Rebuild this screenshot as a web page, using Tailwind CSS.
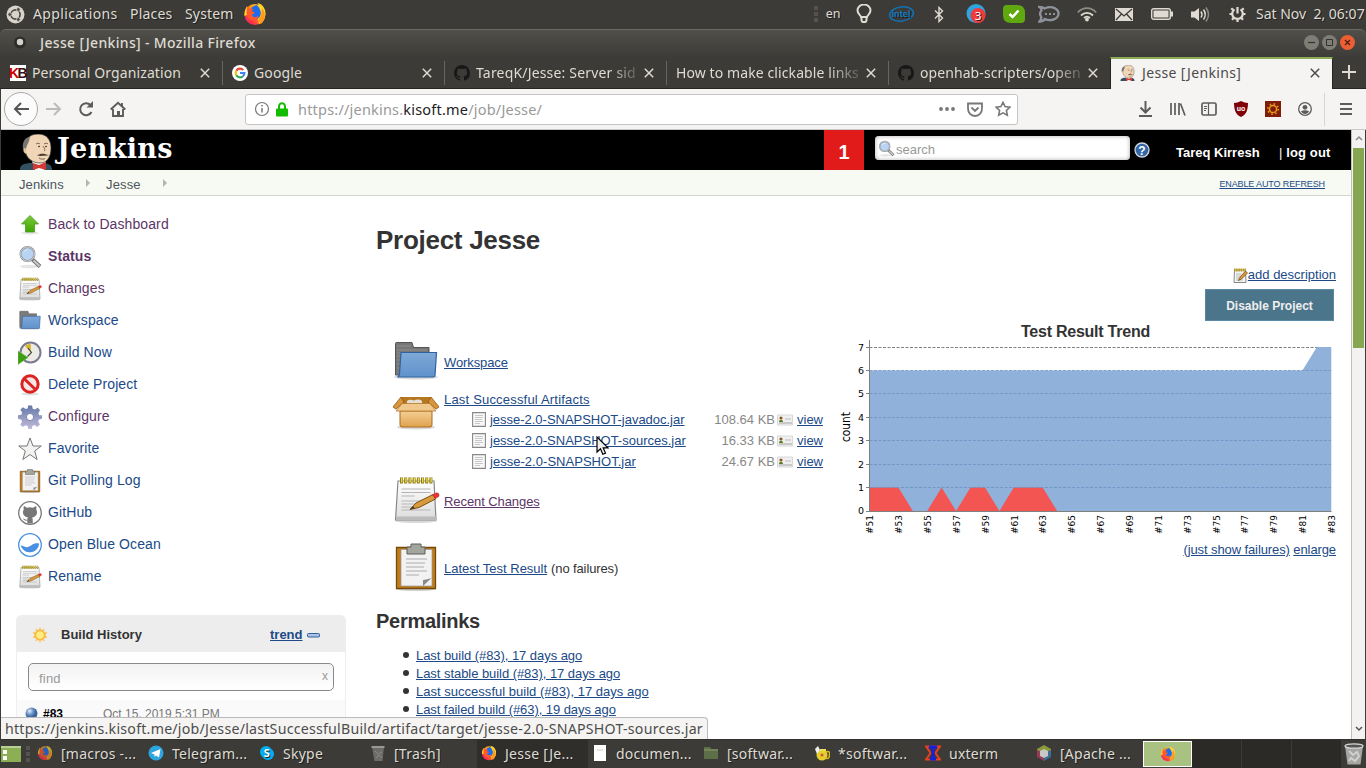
<!DOCTYPE html>
<html lang="en">
<head>
<meta charset="utf-8">
<title>Jesse [Jenkins]</title>
<script src="https://cdn.jsdelivr.net/npm/@tailwindcss/browser@4"></script>
</head>
<body class="w-[1366px] h-[768px] overflow-hidden bg-[#3c3b37] font-['Noto_Sans',sans-serif] text-[14px] text-[#dfdbd2]">
<svg class="absolute size-0">
  <defs>
    <linearGradient id="gBlue" x1="0" y1="0" x2="0" y2="1"><stop offset="0" stop-color="#7fa9d8"/><stop offset="1" stop-color="#5f92cb"/></linearGradient>
    <linearGradient id="gPaper" x1="0" y1="0" x2="0" y2="1"><stop offset="0" stop-color="#fff"/><stop offset="1" stop-color="#dcdcdc"/></linearGradient>
    <linearGradient id="gBox" x1="0" y1="0" x2="0" y2="1"><stop offset="0" stop-color="#f3cf96"/><stop offset="1" stop-color="#e0a24e"/></linearGradient>
    <linearGradient id="gFox" x1="1" y1="0" x2="0" y2="1"><stop offset="0" stop-color="#fff44f"/><stop offset=".4" stop-color="#ff980e"/><stop offset=".75" stop-color="#ff3647"/><stop offset="1" stop-color="#e31587"/></linearGradient>
    <linearGradient id="gGreen" x1="0" y1="0" x2="0" y2="1"><stop offset="0" stop-color="#7cc83c"/><stop offset="1" stop-color="#3fa800"/></linearGradient>
    <linearGradient id="gGear" x1="0" y1="0" x2="0" y2="1"><stop offset="0" stop-color="#6478a8"/><stop offset="1" stop-color="#c3bddb"/></linearGradient>
    <radialGradient id="gBall" cx=".35" cy=".3"><stop offset="0" stop-color="#e6f0fb"/><stop offset=".55" stop-color="#7199cb"/><stop offset="1" stop-color="#3d659c"/></radialGradient>
  </defs>
  <symbol id="firefox" viewBox="0 0 24 24"><circle cx="12" cy="12.500" r="10.500" fill="url(#gFox)"/><path d="M4 4c-1.500 3-3 6-2.500 10L6 12zM14.500 1C19 2 21 5 22 8c1.500 5-1 12-6 14l-2-8 3-5q0-5-2.500-8z" fill="#ffd52e"/><path d="M19 6c4 4 4 12-1 16l-3-3 3-6z" fill="#ff9a1c"/><path d="M13.500 3q3 2.500 4 6c1 4-1 8-5 8.500-3.500.3-6-1.500-6.500-4.500C5.500 9 8 4.500 13.500 3z" fill="#1a6cf0"/><path d="M5 4c0 1.500.5 2.500 1.500 3C8 6.200 9.500 6.500 10.500 7c-1 .8-1.500 1.500-1.500 2.500l2.500.5c.8 1.500-1.500 2-2.500 3 1 3 5 2.500 6.500.5C16 18 9 20 5.500 16 3 13 3 8 5 4z" fill="#ff5a2a"/></symbol>
  <symbol id="github" viewBox="0 0 16 16"><path fill="currentColor" d="M8 0C3.580 0 0 3.580 0 8c0 3.540 2.290 6.530 5.470 7.590.4.070.55-.17.55-.38 0-.19-.01-.82-.01-1.490-2.010.37-2.530-.49-2.690-.94-.09-.23-.48-.94-.82-1.130-.28-.15-.68-.52-.01-.53.63-.01 1.080.58 1.230.82.72 1.210 1.870.87 2.330.66.070-.52.28-.87.51-1.070-1.780-.2-3.640-.89-3.640-3.950 0-.87.31-1.590.82-2.150-.08-.2-.36-1.020.08-2.120 0 0 .67-.21 2.200.82.64-.18 1.320-.27 2-.27s1.360.09 2 .27c1.530-1.040 2.200-.82 2.200-.82.44 1.100.16 1.920.08 2.120.51.56.82 1.270.82 2.150 0 3.070-1.870 3.750-3.650 3.950.29.25.54.73.54 1.480 0 1.070-.01 1.930-.01 2.200 0 .21.15.46.55.38A8.010 8.010 0 0 0 16 8c0-4.420-3.580-8-8-8z"/></symbol>
  <symbol id="xmark" viewBox="0 0 10 10"><path d="M.8.8l8.400 8.400M9.200.8L.8 9.200" stroke="currentColor" stroke-width="1.500" fill="none"/></symbol>
  <symbol id="butler" viewBox="0 0 34 36"><path d="M1 36c0-5 3-6 9-7h15c5 1 8 2 8 7z" fill="#335061"/><path d="M13 27l3 9h9l2-9z" fill="#fff"/><path d="M6 10C7 3 13 0 19 0c9 0 13 6 13 14 0 9-4 15-11 15C13 29 7 24 6 16z" fill="#f0d6b7" stroke="#333" stroke-width=".7"/><path d="M11 3C6 3 3 8 4 15l3 2c0-5 2-7 3-10z" fill="#77756f"/><path d="M6.500 14c-3-1-3 5 1 6z" fill="#e8c49c"/><path d="M17 10c1.500-1 3-1 4 0M25 10c1.500-1 3-1 4 0M24 12c1 2 3 4 1 5M20 24c2 1.500 5 1.500 6 .5" fill="none" stroke="#6b5440" stroke-width=".9"/><path d="M18 21.500c3-2 7-2.500 12 0-3-.2-8 1-12 0z" fill="#4a3c30"/><circle cx="20" cy="12.500" r=".8" fill="#111"/><circle cx="27" cy="12.500" r=".8" fill="#111"/><path d="M14 29l6 2 7-3v8l-7-2-6 2z" fill="#d33833"/></symbol>
  <symbol id="folder" viewBox="0 0 48 48"><ellipse cx="24" cy="39" rx="22" ry="2.500" fill="#000" opacity=".15"/><path d="M3.500 37V5.500c0-.6.400-1 1-1H20l1.500 5H37v28z" fill="#777" stroke="#555"/><path d="M5 8h14M5 12h30M5 15h4M5 18h4M5 22h3M5 26h3M5 30h2" stroke="#8e8e8e"/><path d="M9 14.500h35.500L43 37.500q-.2 1.500-1.500 1.500H5.500q2-1 2-3z" fill="url(#gBlue)" stroke="#2f62a0" stroke-width="1.200"/></symbol>
  <symbol id="notepad" viewBox="0 0 48 48"><ellipse cx="24" cy="45" rx="21" ry="2" fill="#000" opacity=".15"/><path d="M6 5h36l2 39H3.500z" fill="url(#gPaper)" stroke="#888" stroke-width="1.200"/><path d="M4 40.500h40V44H4z" fill="#bbb"/><path d="M9.500 13h29M9.500 16.500h29M9.500 20h13M9.500 25h20M9.500 28h16M9.500 31h10M9.500 34h29" stroke="#b5b5b5" stroke-width="1.200"/><path d="M8 4.500h33" stroke="#8d7a12" stroke-width="6" stroke-dasharray="3 1.200"/><path d="M9 4.300h32" stroke="#e9d84a" stroke-width="4.500" stroke-dasharray="1.400 2.800"/><path d="M18 33.500l6-6.500 17-8.500 2.500 4.500L27 31.500z" fill="#d99a3c" stroke="#7a4e12" stroke-width="1"/><path d="M18 33.500l3-3.500 1.500 2z" fill="#333"/><path d="M40.500 18.800l4-2q3 0 2.500 3.500l-3.500 2.200z" fill="#e33" stroke="#922" stroke-width=".5"/></symbol>
  <symbol id="clipboard" viewBox="0 0 48 48"><ellipse cx="24" cy="46" rx="20" ry="2" fill="#000" opacity=".18"/><path d="M4.500 4.500h39v41h-39z" fill="#c17d1e" stroke="#75490a" stroke-width="1.300"/><path d="M9 6.500h31V43H9z" fill="#f2f2f2" stroke="#999" stroke-width=".7"/><path d="M14 16h21M14 20h19M14 24h18M14 28h21M14 32h13" stroke="#c4c4c4" stroke-width="1.600"/><path d="M31 43v-6q5-.5 8.500-2z" fill="#888"/><path d="M19 1h10v3h4v7H15V4h4z" fill="#a3a69d" stroke="#5d5f5a"/></symbol>
  <symbol id="magnify" viewBox="0 0 24 24"><ellipse cx="11" cy="21.500" rx="9" ry="1.700" fill="#000" opacity=".1"/><path d="M14.500 14.500l7.500 7" stroke="#777" stroke-width="4"/><path d="M15.500 15.500l6 5.500" stroke="#c8c8c8" stroke-width="2"/><circle cx="9.500" cy="9" r="7" fill="#b8d4f2" stroke="#8b8f94" stroke-width="2"/><circle cx="9.500" cy="9" r="7" fill="none" stroke="#dfe3e8" stroke-width=".7"/><path d="M5 8.500C6 5 9 4 11 4.500 8 5 6 6.500 5 8.500z" fill="#fff"/></symbol>
  <symbol id="doc" viewBox="0 0 14 15"><path d="M.6.600h12.800v13.800H.6z" fill="#f8f8f8" stroke="#888" stroke-width="1.100"/><path d="M3 3.500h8M3 5.500h8M3 7.500h7M3 9.500h8M3 11.500h5" stroke="#c8c8c8"/></symbol>
  <symbol id="card" viewBox="0 0 16 12"><path d="M.5 1h15v10h-15z" fill="#f0f0f0" stroke="#d8d8d8"/><path d="M2 9h13" stroke="#bbb" stroke-width="1.500"/><circle cx="4" cy="4" r="1.600" fill="#8b5a20"/><path d="M2 8c0-3 4-3 4 0z" fill="#597d23"/><path d="M8 5h6" stroke="#bbb"/></symbol>
</svg>
<div class="flex flex-col h-full">

<!-- desktop panel -->
<header class="h-[28px] flex items-center shrink-0 [text-shadow:1px_1px_0_#222]">
  <svg class="ml-[6px] size-[19px] shrink-0" viewBox="0 0 19 19"><circle cx="9.500" cy="9.500" r="9" fill="#d8d4cc"/><circle cx="9.500" cy="9.500" r="4.600" fill="none" stroke="#4a4843" stroke-width="1.700"/><g fill="#4a4843" stroke="#d8d4cc" stroke-width=".8"><circle cx="3.800" cy="9.500" r="1.900"/><circle cx="12.300" cy="4.500" r="1.900"/><circle cx="12.300" cy="14.500" r="1.900"/></g></svg>
  <span class="ml-[8px] w-[97px] -mt-px tracking-[0.350px]">Applications</span><span class="w-[55px] -mt-px tracking-[0.200px]">Places</span><span class="w-[58px] -mt-px tracking-[0.150px]">System</span>
  <svg class="size-[24px]"><use href="#firefox"/></svg>
  <div class="ml-auto flex items-center">
    <div class="w-[4px] flex flex-col gap-[2px] mr-[8px]"><i class="size-[4px] bg-[#55534e]"></i><i class="size-[4px] bg-[#55534e]"></i><i class="size-[4px] bg-[#55534e]"></i></div>
    <span class="w-[20px] text-[12.500px]">en</span>
    <div class="flex items-center [&>div]:w-[37.300px] [&>div]:flex [&>div]:justify-center">
      <div><svg width="16" height="20" fill="none" stroke="#dfdbd2" stroke-width="2"><path d="M5 13c0-1.500-3.500-3-3.500-6.500a6.500 6 0 0 1 13 0C14.500 10 11 11.500 11 13z"/><path d="M5.500 13v3.500l1 1.500h3l1-1.500V13"/></svg></div>
      <div><svg width="27" height="18"><ellipse cx="13.500" cy="9" rx="12" ry="7" fill="none" stroke="#1173b8" stroke-width="1.500" transform="rotate(-8 13.500 9)"/><text x="13" y="12" text-anchor="middle" font-family="Lato" font-weight="bold" font-size="9.500" fill="#1380c8">intel</text></svg></div>
      <div><svg width="10" height="17" fill="none" stroke="#dfdbd2" stroke-width="1.400"><path d="M1 4.500l7.500 7.500L5 15.500v-14L8.500 5 1 12.500"/></svg></div>
      <div><svg width="22" height="20"><circle cx="11" cy="9.500" r="9.500" fill="#2ea5df"/><circle cx="13" cy="11.500" r="7.500" fill="#ef3b3b"/><text x="13" y="16" text-anchor="middle" font-size="11.500" fill="#fff">3</text></svg></div>
      <div><svg width="22" height="18"><path d="M4 0h10q8 0 8 8v6q0 4-4 4H8q-8 0-8-8V4q0-4 4-4z" fill="#5fa80f"/><path d="M6.500 9l3 3 6-6.500" stroke="#fff" stroke-width="2.500" fill="none"/></svg></div>
      <div><svg class="-ml-[4px]" width="22" height="19" fill="none" stroke="#8d9299" stroke-width="2.400"><path d="M1.500 2c3 0 4.500 1 5 1.500C14 0 21 4 20.500 9 20 14.500 12 16.500 7 14c-1 1.500-3 2.500-5.500 2.500C3 15 3.500 13 3 11.500 1.500 9 2 7 3.500 5.500 3.500 4 3 3 1.500 2z"/><path d="M7 9h2M11 9h2M15 9h2" stroke-width="2"/></svg></div>
      <div><svg class="-ml-[3px]" width="20" height="15" fill="none" stroke="#dfdbd2" stroke-width="1.800"><path d="M.8 5.500C6-.3 14-.3 19.200 5.500" stroke="#8d8b84"/><path d="M4 8.500c3.500-3.500 8.500-3.500 12 0M7 11c2-1.800 4-1.800 6 0"/><circle cx="10" cy="12.500" r="1" fill="#dfdbd2"/></svg></div>
      <div><svg class="-ml-[2px]" width="18" height="13"><path d="M0 0h18v13H0z" fill="#dfdbd2"/><path d="M1 1l8 7 8-7M1 12l5.500-6M17 12l-5.500-6" fill="none" stroke="#3c3b37" stroke-width="1.300"/></svg></div>
      <div><svg class="-ml-[2px]" width="22" height="12"><rect x=".7" y=".7" width="18.600" height="10.600" rx="2" fill="none" stroke="#dfdbd2" stroke-width="1.400"/><path d="M2.500 2.500h15v7h-15zM20 3.500h2v5h-2z" fill="#dfdbd2"/></svg></div>
      <div><svg width="20" height="17"><path d="M1 5.500h3.500L9 2v13L4.500 11.500H1z" fill="#dfdbd2"/><path d="M11 5.500q2 3 0 6M13.500 3.500q3.500 5 0 10" fill="none" stroke="#dfdbd2" stroke-width="1.500"/><path d="M16 1.500q5 7 0 14" fill="none" stroke="#8d8b84" stroke-width="1.500"/></svg></div>
      <div><svg width="17" height="18" fill="none" stroke="#dfdbd2"><path d="M5.500 4.300a5.300 5.300 0 1 0 6 0" stroke-width="2.200"/><path d="M8.500 2v6.500M3.800 4.800L2.300 3.300M13.200 4.800l1.500-1.500M3 9H.5M14 9h2.500M4.500 13l-1.500 1.700M12.500 13l1.500 1.700M8.500 14.500V17" stroke-width="2.200"/></svg></div>
    </div>
    <span class="w-[110px] -mt-px whitespace-nowrap">Sat Nov&nbsp; 2, 06:07</span>
  </div>
</header>

<!-- window title -->
<div class="h-[29px] mt-[1px] shrink-0 rounded-t-[6px] border-t border-[#6a6963] bg-linear-to-b from-[#504f4a] to-[#3c3b37] flex items-center pb-[4px]">
  <svg class="ml-[13px] size-[14px]" viewBox="0 0 14 14"><circle cx="7" cy="7.500" r="6" fill="#2e2d2a"/><circle cx="7" cy="7" r="3.200" fill="#d5d2ca"/></svg>
  <span class="ml-[13px] font-medium text-[14px] tracking-[0.340px]">Jesse [Jenkins] - Mozilla Firefox</span>
  <div class="ml-auto mr-[11px] flex gap-[3px]">
    <svg class="size-[15px]" viewBox="0 0 15 15"><circle cx="7.500" cy="7.500" r="7.500" fill="#7e7d76"/><path d="M4 7.500h7" stroke="#33322e" stroke-width="1.200"/></svg>
    <svg class="size-[15px]" viewBox="0 0 15 15"><circle cx="7.500" cy="7.500" r="7.500" fill="#7e7d76"/><path d="M4.500 4.500h6v6h-6z" fill="none" stroke="#33322e"/></svg>
    <svg class="size-[15px]" viewBox="0 0 15 15"><circle cx="7.500" cy="7.500" r="7.500" fill="#ec5f34"/><path d="M5 5l5 5M10 5l-5 5" stroke="#4a1c0e" stroke-width="1.200"/></svg>
  </div>
</div>

<!-- tab strip -->
<div class="h-[32px] -mt-[1px] shrink-0 flex pl-px border-b border-[#252420]">
  <div class="w-[222px] flex items-center pl-[9px] relative"><div class="w-[16px] h-[16px] bg-white flex justify-center items-center text-[14px] leading-[16px] font-bold tracking-[-1.500px] font-['Liberation_Sans'] text-[#d00000] pr-[1px]">K<span class="text-[#3a1010]">B</span></div><span class="ml-[6px] w-[155px] whitespace-nowrap tracking-[0.120px]">Personal Organization</span><svg class="ml-[13px] size-[10px]"><use href="#xmark"/></svg><i class="absolute right-0 top-[4px] h-[24px] w-px bg-[#66655f]"></i></div>
  <div class="w-[222px] flex items-center pl-[9px] relative"><svg class="size-[16px]" viewBox="0 0 16 16" fill="none" stroke-width="2.200"><circle cx="8" cy="8" r="8" fill="#fff" /><path d="M4.300 5.800A4.400 4.400 0 0 1 11.200 5" stroke="#ea4335"/><path d="M4.300 10.200a4.400 4.400 0 0 1 0-4.500" stroke="#fbbc05"/><path d="M11 11.200a4.400 4.400 0 0 1-6.700-1" stroke="#34a853"/><path d="M8 8h4.400q-.1 2-1.500 3.300" stroke="#4285f4"/></svg><span class="ml-[6px] w-[155px] tracking-[0.150px]">Google</span><svg class="ml-[13px] size-[10px]"><use href="#xmark"/></svg><i class="absolute right-0 top-[4px] h-[24px] w-px bg-[#66655f]"></i></div>
  <div class="w-[222px] flex items-center pl-[9px] relative"><svg class="size-[16px] text-[#191717]"><use href="#github"/></svg><span class="ml-[6px] w-[160px] whitespace-nowrap tracking-[0.180px] [mask-image:linear-gradient(to_right,#000_133px,transparent_168px)]">TareqK/Jesse: Server sid</span><svg class="ml-[8px] size-[10px]"><use href="#xmark"/></svg><i class="absolute right-0 top-[4px] h-[24px] w-px bg-[#66655f]"></i></div>
  <div class="w-[222px] flex items-center pl-[9px] relative"><span class="w-[183px] whitespace-nowrap tracking-[0.100px] [mask-image:linear-gradient(to_right,#000_152px,transparent_192px)]">How to make clickable links</span><svg class="ml-[7px] size-[10px]"><use href="#xmark"/></svg><i class="absolute right-0 top-[4px] h-[24px] w-px bg-[#66655f]"></i></div>
  <div class="w-[221px] flex items-center pl-[9px]"><svg class="size-[16px] text-[#191717]"><use href="#github"/></svg><span class="ml-[6px] w-[160px] whitespace-nowrap tracking-[0.080px] [mask-image:linear-gradient(to_right,#000_133px,transparent_168px)]">openhab-scripters/open</span><svg class="ml-[8px] size-[10px]"><use href="#xmark"/></svg></div>
  <div class="w-[223px] h-[32px] flex items-center pl-[9px] pb-[3px] bg-[#f5f4f2] text-[#4c4c4c] border-x border-[#252420] border-t-2 border-t-[#8cab57]"><svg class="w-[15px] h-[16px]"><use href="#butler"/></svg><span class="ml-[7px] w-[155px] tracking-[0.350px]">Jesse [Jenkins]</span><svg class="ml-[13px] size-[10px]"><use href="#xmark"/></svg></div>
  <svg class="ml-[9px] mt-[8px] size-[14px]" viewBox="0 0 14 14"><path d="M7 0v14M0 7h14" stroke="#dfdbd2" stroke-width="2"/></svg>
</div>

<!-- navigation toolbar -->
<div class="h-[41px] ml-px shrink-0 flex items-center bg-[#f5f4f2] border-b border-[#c9c8c6] text-[#5c5c5c]">
  <div class="ml-[3px] size-[34px] rounded-full bg-[#fcfcfc] border border-[#aaa] flex items-center justify-center"><svg class="-ml-px" width="16" height="14" fill="none" stroke="#555" stroke-width="2"><path d="M16 7H2M8 1L2 7l6 6"/></svg></div>
  <svg class="ml-[8px]" width="16" height="14" fill="none" stroke="#bbb" stroke-width="2"><path d="M0 7h14M8 1l6 6-6 6"/></svg>
  <svg class="ml-[16px]" width="16" height="16" fill="none" stroke="#5c5c5c" stroke-width="2"><path d="M13.500 11A6 6 0 1 1 12.500 4"/><path d="M15 0v6.500H8.500z" fill="#5c5c5c" stroke="none"/></svg>
  <svg class="ml-[16px]" width="16" height="16" fill="none" stroke="#5c5c5c" stroke-width="1.900"><path d="M.7 8.500L8 1.700l7.300 6.800M3 8v7h10V8M12 2v3"/><path d="M7 10h3v5H7z" fill="#5c5c5c" stroke="none"/></svg>
  <div class="ml-[119px] w-[773px] h-[31px] rounded-[3px] bg-white border border-[#c4c4c4] flex items-center">
    <svg class="ml-[8px]" width="16" height="16"><circle cx="8" cy="8" r="6.500" fill="none" stroke="#777" stroke-width="1.200"/><path d="M8 7v4.500M8 4v1.600" stroke="#777" stroke-width="1.500"/></svg>
    <svg class="ml-[6px]" width="12" height="15"><path d="M3 7V4.500a3 3.200 0 0 1 6 0V7" fill="none" stroke="#12bc00" stroke-width="2"/><rect y="6.500" width="12" height="8" rx="1" fill="#12bc00"/></svg>
    <span class="ml-[10px] mt-px text-[#999] whitespace-nowrap text-[14.500px] tracking-[0.200px]">https://jenkins.<span class="text-[#222]">kisoft.me</span>/job/Jesse/</span>
    <svg class="ml-auto" width="16" height="4" fill="#777"><circle cx="2" cy="2" r="1.900"/><circle cx="8" cy="2" r="1.900"/><circle cx="14" cy="2" r="1.900"/></svg>
    <svg class="ml-[12px]" width="16" height="15" fill="none" stroke="#777" stroke-width="1.800"><path d="M1 1.500h14v5C15 11 12 14 8 14s-7-3-7-7.500zM4.500 5.500L8 9l3.500-3.500"/></svg>
    <svg class="ml-[12px] mr-[6px]" width="16" height="16" fill="none" stroke="#777" stroke-width="1.600"><path d="M8 1.300l2.100 4.300 4.800.6-3.500 3.300.9 4.700L8 11.900l-4.300 2.300.9-4.700L1.100 6.200l4.800-.6z"/></svg>
  </div>
  <svg class="ml-[121px]" width="13" height="16" fill="none" stroke="#5c5c5c" stroke-width="2"><path d="M6.500 0v11M1.500 6.500l5 5 5-5M0 15h13"/></svg>
  <svg class="ml-[18px]" width="16" height="14" fill="none" stroke="#5c5c5c"><path d="M1 1v12M5 1v12M9 1v12M10.500 1.500l4.500 12" stroke-width="1.700"/></svg>
  <svg class="ml-[15px]" width="16" height="14" fill="none" stroke="#5c5c5c" stroke-width="1.700"><rect x="1" y="1" width="14" height="12" rx="1.500"/><path d="M7.500 1v12M3 4.500h3M3 6.500h3M3 8.500h2" stroke-width="1.200"/></svg>
  <svg class="ml-[17px]" width="14" height="16"><path d="M7 0q3.500 2 7 2c0 7-2 12-7 14C2 14 0 9 0 2q3.500 0 7-2z" fill="#800008"/><text x="7" y="10" text-anchor="middle" font-size="7" font-weight="bold" fill="#fff" font-family="Liberation Sans">uo</text></svg>
  <svg class="ml-[17px]" width="16" height="16"><path d="M0 0h16v16H0z" fill="#7d1d0a"/><circle cx="8" cy="8" r="3.600" fill="none" stroke="#e89b1e" stroke-width="1.500"/><circle cx="8" cy="8" r="5.200" fill="none" stroke="#e89b1e" stroke-width="1.600" stroke-dasharray="1.500 2.580"/></svg>
  <svg class="ml-[17px]" width="14" height="14"><circle cx="7" cy="7" r="6.300" fill="none" stroke="#5c5c5c" stroke-width="1.300"/><circle cx="7" cy="5.300" r="2.400" fill="#5c5c5c"/><path d="M2.800 9.500q4.200-2.500 8.400 0-4.200 5-8.400 0z" fill="#5c5c5c"/></svg>
  <i class="ml-[12px] h-[33px] w-px bg-[#d7d6d4]"></i>
  <svg class="ml-[15px]" width="12" height="12" stroke="#5c5c5c" stroke-width="2"><path d="M0 1h12M0 6h12M0 11h12"/></svg>
</div>

<!-- page viewport -->
<div class="h-[609px] ml-px mr-px shrink-0 flex relative bg-white overflow-hidden text-[13px] text-[#333] font-['Liberation_Sans',sans-serif]">
  <div class="w-[1350px] h-[609px] overflow-hidden">
    <div class="h-[40px] bg-black flex items-center text-white">
      <svg class="ml-[18px] mt-[4px] w-[34px] h-[36px] shrink-0"><use href="#butler"/></svg>
      <span class="ml-[4px] -mt-[3px] w-[120px] font-['DejaVu_Serif','Liberation_Serif'] font-bold text-[27px] leading-[30px] tracking-[0.350px]">Jenkins</span>
      <div class="ml-auto w-[40px] h-[40px] bg-[#e11a1a] flex items-center justify-center text-[20px] font-bold pt-[3px]">1</div>
      <div class="ml-[11px] w-[255px] h-[24px] -mt-[4px] rounded-[4px] bg-white [box-shadow:inset_0_0_4px_#aaa] flex items-center pl-[3px] text-[#999]"><svg class="size-[17px]"><use href="#magnify"/></svg><span class="ml-px mt-[3px]">search</span></div>
      <svg class="ml-[4px]" width="16" height="16"><circle cx="8" cy="8" r="7" fill="#3465a4" stroke="#cdd8e8" stroke-width="1.300"/><text x="8" y="12.500" text-anchor="middle" font-size="12" font-weight="bold" fill="#fff">?</text></svg>
      <span class="ml-[26px] w-[103px] mt-[5px] font-bold text-[13px]">Tareq Kirresh</span><span class="mt-[5px] w-[72px] font-bold tracking-[0.120px]"><span class="font-normal">|</span> log out</span>
    </div>
    <div class="h-[26px] bg-[#f6faf2] border-b border-[#d3d7cf] flex items-center text-[#4d545d] pt-[4px]">
      <span class="ml-[18px] w-[67px] tracking-[0.100px]">Jenkins</span><svg width="4" height="8" class="-mt-[4px]"><path d="M0 0l4 4-4 4z" fill="#b4b4b4"/></svg>
      <span class="ml-[16px] w-[57px] tracking-[0.150px]">Jesse</span><svg width="4" height="8" class="-mt-[4px]"><path d="M0 0l4 4-4 4z" fill="#b4b4b4"/></svg>
      <a class="ml-auto mr-[26px] underline text-[9px] text-[#204a87] tracking-[-0.120px]">ENABLE AUTO REFRESH</a>
    </div>
    <div class="flex">
      <!-- side panel -->
      <aside class="w-[375px] pt-[12px] pl-[15px]">
        <nav class="text-[14px] tracking-[0.100px] text-[#204a87] [&>a]:flex [&>a]:items-center [&>a]:h-[32px] [&>a]:pl-[2px] [&>a>svg]:mr-[6px] [&>a>svg]:mt-[1px] [&>a>svg]:size-[24px]">
          <a class="text-[#5c3566]"><svg viewBox="0 0 24 24"><ellipse cx="12" cy="20" rx="9" ry="1.500" fill="#000" opacity=".1"/><path d="M12 2.500l8.500 8.500h-4v8h-9v-8h-4z" fill="url(#gGreen)" stroke="#4a9a1c" stroke-width=".8"/></svg>Back to Dashboard</a>
          <a class="text-[#5c3566] font-bold"><svg viewBox="0 0 24 24"><use href="#magnify"/></svg>Status</a>
          <a class="text-[#5c3566]"><svg viewBox="0 0 24 24"><use href="#notepad"/></svg>Changes</a>
          <a><svg viewBox="0 0 24 24"><use href="#folder"/></svg>Workspace</a>
          <a><svg viewBox="0 0 24 24"><circle cx="12.500" cy="11.500" r="10" fill="#eceae4" stroke="#7c7a90" stroke-width="2"/><path d="M12.500 11.500L7 5q5-3.500 6-1z" fill="#d8b62c"/><path d="M10 7l3.500 4.500-4 4" fill="none" stroke="#444" stroke-width="1.100"/><path d="M0 10l10 6.500L0 23.500z" fill="#3f9e14" stroke="#6cc343" stroke-width=".6"/></svg>Build Now</a>
          <a><svg viewBox="0 0 24 24"><ellipse cx="12" cy="21" rx="9" ry="1.500" fill="#000" opacity=".12"/><circle cx="12" cy="11" r="8.200" fill="#f7e6e6" stroke="#d22" stroke-width="3"/><path d="M6 5.500l12 11.500" stroke="#d22" stroke-width="3"/></svg>Delete Project</a>
          <a class="text-[#5c3566]"><svg viewBox="0 0 24 24"><path fill="url(#gGear)" d="M10 .500h4l.8 3.300 2 .8 3-1.800 2.200 2.500-1.600 3 .7 2h3v3.500l-3.200.7-.8 2 1.900 3-2.800 2.500-2.800-1.900-2 .8-.6 3.400h-3.400l-.8-3.300-2-.8-3 1.700L2.300 19.500l1.800-2.800-.7-2L0 13.800v-3.500l3.300-.6.900-2-1.900-3L4.800 2.300l3 1.800 2-.8z"/><circle cx="12" cy="12" r="3.600" fill="#fff" stroke="#8187b0"/></svg>Configure</a>
          <a><svg viewBox="0 0 24 24"><path d="M12 1l3 8h8.300l-6.600 5 2.400 8.500L12 17.500 4.900 22.500 7.300 14 .7 9H9z" fill="#f2f2f0" stroke="#777"/></svg>Favorite</a>
          <a><svg viewBox="0 0 24 24"><use href="#clipboard"/></svg>Git Polling Log</a>
          <a><svg viewBox="0 0 24 24"><circle cx="12" cy="12" r="11.300" fill="#fff" stroke="#777" stroke-width="1.300"/><path d="M6 5l3 1.700q3-.8 6 0L18 5q.8 1.800.2 3.500c2.300 4-.2 7.500-4.200 8 .8.800.8 1.500.8 6H9.300v-3C7 20 5.500 19 5 17.500c1.500.3 2 1.500 4.300 1.200 0-1 .2-1.700.8-2.200C6 16 3.500 12.500 5.800 8.500Q5.200 6.800 6 5z" fill="#777"/></svg>GitHub</a>
          <a><svg viewBox="0 0 24 24"><circle cx="12" cy="12" r="11.300" fill="#fff" stroke="#4a90e2" stroke-width="1.300"/><path d="M2.600 12.500c3 0 4 2.500 8 1.300 3.500-1.500 5-4.500 10.600-3.300A9.500 9.500 0 0 1 2.600 12.500z" fill="#4a90e2"/></svg>Open Blue Ocean</a>
          <a><svg viewBox="0 0 24 24"><use href="#notepad"/></svg>Rename</a>
        </nav>
        <section class="mt-[23px] w-[330px] h-[140px] border border-[#eee] rounded-t-[5px]">
          <div class="h-[36px] bg-[#ededed] flex items-center font-bold rounded-t-[4px]">
            <svg class="ml-[15px] mt-[2px]" width="16" height="16"><path d="M8 0l1.500 3 3-1.500L12 4.500l3.500 1L13.500 8l2 2.500-3.500 1 .5 3-3-1.500L8 16l-1.500-3-3 1.500.5-3-3.500-1L2.500 8l-2-2.500 3.500-1-.5-3 3 1.500z" fill="#f9c566"/><circle cx="8" cy="8" r="4.300" fill="#ffee80" stroke="#f2a52b" stroke-width=".8"/></svg>
            <span class="ml-[13px] mt-[2px] w-[209px]">Build History</span><a class="underline mt-[2px] text-[#204a87]">trend</a>
            <svg class="ml-[4px] mt-[2px]" width="13" height="5"><rect x=".5" y=".5" width="12" height="3.500" rx="1" fill="#a8c3e6" stroke="#335f9e"/></svg>
          </div>
          <div class="mt-[11px] ml-[11px] w-[306px] h-[28px] rounded-[5px] border border-[#8a8a8a] bg-linear-to-b from-[#f2f2f2] to-white flex items-center justify-between pl-[10px] pr-[5px] text-[#999]"><span class="mt-[3px] tracking-[0.200px]">find</span><span class="-mt-[2px] text-[12px]">x</span></div>
          <div class="mt-[9px] h-[50px] bg-[#fafafa] flex pt-[7px] pl-[8px] text-[12px] leading-[15px]"><svg width="13" height="13"><circle cx="6.500" cy="6.500" r="6" fill="url(#gBall)"/></svg><span class="ml-[5px] w-[60px] font-bold text-black">#83</span><span class="text-[#777] text-[12px]">Oct 15, 2019 5:31 PM</span></div>
        </section>
      </aside>
      <!-- project page -->
      <main class="w-[462px] h-[543px] text-[#204a87]">
        <h1 class="pt-[29px] h-[144px] leading-[30px] text-[26px] font-bold text-[#333] tracking-[-0.280px]">Project Jesse</h1>
        <div class="pl-[16px] [&_a]:underline">
          <div class="h-[48px] flex items-center -mt-[2px]"><svg class="size-[48px] mr-[4px]"><use href="#folder"/></svg><a class="mt-[1px] tracking-[-0.100px]">Workspace</a></div>
          <div class="mt-[4px] h-[82px] flex">
            <svg class="w-[48px] h-[40px] mr-[4px] mt-[2px] shrink-0" viewBox="0 0 48 40"><ellipse cx="24" cy="35" rx="19" ry="2.500" fill="#000" opacity=".15"/><path d="M9 5h30l1 14H7z" fill="#b5771f"/><path d="M9 5L1 15l3 2 8-7zM39 5l8 10-3 2-8-7z" fill="#d8953b" stroke="#8a5712" stroke-width=".8"/><path d="M15 12V9q3-2 7-.5 5-2 8 .5v3z" fill="#e4e0d8"/><path d="M8 19h32v14q0 2-2 2H10q-2 0-2-2z" fill="url(#gBox)" stroke="#a96d1c"/><path d="M10 11.500h28l6 7.500H4z" fill="#f0c88c" stroke="#b57a2a" stroke-width=".8"/></svg>
            <div class="pt-[2px]">
              <a class="block leading-[15px] tracking-[0.190px]">Last Successful Artifacts</a>
              <div class="mt-[2px] ml-[28px] w-[352px] [&>div]:h-[21px] [&>div]:flex [&>div]:items-center text-[13px]">
                <div><svg class="w-[14px] h-[15px] mr-[4px]"><use href="#doc"/></svg><a class="tracking-[-0.020px]">jesse-2.0-SNAPSHOT-javadoc.jar</a><span class="ml-auto text-[#888]">108.64 KB</span><svg class="ml-[2px] w-[16px] h-[12px]"><use href="#card"/></svg><a class="ml-[4px] w-[27px]">view</a></div>
                <div><svg class="w-[14px] h-[15px] mr-[4px]"><use href="#doc"/></svg><a>jesse-2.0-SNAPSHOT-sources.jar</a><span class="ml-auto text-[#888]">16.33 KB</span><svg class="ml-[2px] w-[16px] h-[12px]"><use href="#card"/></svg><a class="ml-[4px] w-[27px]">view</a></div>
                <div><svg class="w-[14px] h-[15px] mr-[4px]"><use href="#doc"/></svg><a class="tracking-[0.030px]">jesse-2.0-SNAPSHOT.jar</a><span class="ml-auto text-[#888]">24.67 KB</span><svg class="ml-[2px] w-[16px] h-[12px]"><use href="#card"/></svg><a class="ml-[4px] w-[27px]">view</a></div>
              </div>
            </div>
          </div>
          <div class="mt-[4px] h-[48px] flex items-center text-[#5c3566]"><svg class="size-[48px] mr-[4px]"><use href="#notepad"/></svg><a class="mt-[3px] tracking-[-0.080px]">Recent Changes</a></div>
          <div class="mt-[19px] h-[48px] flex items-center"><svg class="size-[48px] mr-[4px]"><use href="#clipboard"/></svg><a class="mt-[3px]">Latest Test Result</a><span class="ml-[4px] mt-[3px] text-[#333] tracking-[-0.120px]">(no failures)</span></div>
        </div>
        <h2 class="mt-[18px] text-[20px] leading-[24px] font-bold text-[#333] tracking-[-0.280px]">Permalinks</h2>
        <ul class="mt-[14px] ml-[27px] leading-[18px] [&>li]:h-[18px] [&>li]:flex [&>li]:items-center [&_i]:size-[6px] [&_i]:mr-[7px] [&_i]:-mt-[2px] [&_i]:rounded-full [&_i]:bg-[#333] [&_a]:underline">
          <li><i></i><a class="tracking-[-0.050px]">Last build (#83), 17 days ago</a></li><li><i></i><a class="tracking-[-0.050px]">Last stable build (#83), 17 days ago</a></li><li><i></i><a class="tracking-[0.020px]">Last successful build (#83), 17 days ago</a></li><li><i></i><a class="tracking-[-0.070px]">Last failed build (#63), 19 days ago</a></li>
        </ul>
      </main>
      <!-- trend column -->
      <div class="w-[498px] pt-[70px] flex flex-col items-end text-[#204a87]">
        <div class="flex items-center h-[18px]"><svg class="size-[15px]" viewBox="0 0 15 15"><path d="M1.500 2h11l.5 12.500H1z" fill="#f4f4f2" stroke="#888"/><path d="M3 6h5M3 8h4M3 10h3M3 12h7" stroke="#bbb"/><path d="M1 2h12" stroke="#b89a1a" stroke-width="3" stroke-dasharray="1.500 .7"/><path d="M5.500 12.500L7 9l5.500-6 2 2-6 6z" fill="#d99a3c" stroke="#6a430d" stroke-width=".7"/></svg><a class="underline">add description</a></div>
        <button class="mt-[5px] mr-[2px] pt-[2px] w-[129px] h-[32px] bg-[#4b758b] border border-[#5a8aa3] text-[#eee] text-[12px] font-bold">Disable Project</button>
        <div class="w-full h-[19px] pt-[1px] pr-[3px] text-center leading-[19px] text-[16px] font-bold text-[#333] tracking-[-0.240px]">Test Result Trend</div>
        <svg class="w-[498px] h-[200px]" viewBox="838 340 498 200" font-size="9.500" font-family="DejaVu Sans">
          <path d="M869.500 347.500H1331" stroke="#808080" stroke-dasharray="3 1.500" fill="none"/>
          <path d="M869.500 511V370.500H1302.400L1316.900 347H1331.300V511z" fill="#8fb1da"/>
          <path d="M869.500 511V487.500H898.400L912.800 511zM927.200 511l14.400-23.500L956.100 511zM956.100 511l14.400-23.500h14.500L999.400 511zM999.400 511l14.400-23.500h28.900L1057.100 511z" fill="#f35553"/>
          <path d="M869.500 370.500H1331M869.500 393.500H1331M869.500 417.500H1331M869.500 440.500H1331M869.500 464.500H1331M869.500 487.500H1331" stroke="#6b8fc0" stroke-opacity=".75" stroke-dasharray="3 1.500"/>
          <path d="M869.500 340v171.500M866 511.500h465.500M866 487.500h3M866 464.500h3M866 440.500h3M866 417.500h3M866 393.500h3M866 370.500h3M866 347.500h3" stroke="#808080" fill="none"/>
          <g text-anchor="end"><text x="864" y="351">7</text><text x="864" y="374">6</text><text x="864" y="397">5</text><text x="864" y="421">4</text><text x="864" y="444">3</text><text x="864" y="468">2</text><text x="864" y="491">1</text><text x="864" y="514">0</text></g>
          <text transform="translate(850 442) rotate(-90)" font-size="12" textLength="30" lengthAdjust="spacingAndGlyphs">count</text>
          <g id="xlabels" fill="#000" font-size="9" font-weight="500"></g>
        </svg>
        <div class="mt-[1px] leading-[18px] tracking-[-0.100px]"><a class="underline">(just show failures)</a> <a class="underline">enlarge</a></div>
      </div>
    </div>
  </div>
  <!-- scrollbar -->
  <div class="w-[14px] h-full border-l border-[#c0bfbd] bg-[#f3f2f0] flex flex-col items-center">
    <svg class="h-[18px]" width="8" height="18" fill="none" stroke="#888" stroke-width="1.500"><path d="M1 10l3-3 3 3"/></svg>
    <div class="w-[11px] h-[200px] bg-[#86a651]"></div>
    <svg class="mt-auto" width="8" height="20" fill="none" stroke="#555" stroke-width="1.500"><path d="M1 8l3 3 3-3"/></svg>
  </div>
  <div class="absolute left-0 bottom-0 h-[22px] w-[707px] bg-[#f5f4f2] border-t border-r border-[#bbb] rounded-tr-[4px] pl-[4px] leading-[21px] whitespace-nowrap font-['Noto_Sans'] text-[14.200px] tracking-[0.230px] text-[#4c4c4c]">https://jenkins.kisoft.me/job/Jesse/lastSuccessfulBuild/artifact/target/jesse-2.0-SNAPSHOT-sources.jar</div>
  <svg class="absolute left-[595px] top-[306px]" width="13" height="20"><path d="M1 1v15l3.500-3.300 2.300 5.500 2.700-1.100-2.300-5.300H12z" fill="#eee" stroke="#000" stroke-width="1.200"/></svg>
</div>

<!-- taskbar -->
<footer class="h-[29px] shrink-0 flex items-center text-[14px] border-t border-[#33322e] [text-shadow:1px_1px_0_#222]">
  <div class="ml-px w-[20px] h-[16px] bg-[#8cae55] border-t-2 border-[#b9cf95] relative"><i class="absolute left-[2px] top-[2px] h-[10px] w-[4px] border-y-[4px] border-white"></i></div>
  <div class="ml-[5px] w-[4px] flex flex-col gap-[2px]"><i class="size-[4px] bg-[#55534e]"></i><i class="size-[4px] bg-[#55534e]"></i><i class="size-[4px] bg-[#55534e]"></i></div>
  <div class="ml-[3px] flex h-full [&>div]:w-[111px] [&>div]:flex [&>div]:items-center [&>div]:pl-[4px] [&>div]:pb-[2px] [&>div]:whitespace-nowrap [&>div>svg]:size-[16px] [&>div>svg]:shrink-0 [&>div>svg]:mr-[8px] tracking-[0.250px]">
    <div><svg class="opacity-70"><use href="#firefox"/></svg>[macros -...</div>
    <div><svg viewBox="0 0 16 16"><circle cx="8" cy="8" r="7.500" fill="#2ca5e0"/><path d="M3 8l9.500-4-1.500 8.500-3-2-1.500 1.500v-2.500z" fill="#fff"/></svg>Telegram...</div>
    <div><svg viewBox="0 0 16 16"><circle cx="7" cy="7" r="6" fill="#00aff0"/><circle cx="9" cy="9" r="6" fill="#00aff0"/><text x="8" y="12" text-anchor="middle" font-size="11" font-weight="bold" fill="#fff">S</text></svg>Skype</div>
    <div><svg viewBox="0 0 16 16"><path d="M2 2h12l-1.500 14h-8z" fill="#6d6c69"/><path d="M1.500 2h13" stroke="#999" stroke-width="2"/><path d="M5 6l3 3 4-2M6 13l3-3 3 3" stroke="#8a8986" fill="none"/></svg>[Trash]</div>
    <div class="bg-[#2f2e2b]"><svg><use href="#firefox"/></svg>Jesse [Je...</div>
    <div><svg viewBox="0 0 16 16"><path d="M2 0h12v16H2z" fill="#fff"/><path d="M5 5h6" stroke="#ccc"/></svg>documen...</div>
    <div><svg viewBox="0 0 16 16"><path d="M1 2h6l1 2h7v10H1z" fill="#5d6f46"/><path d="M1 5h14" stroke="#8a9a75"/></svg>[softwar...</div>
    <div><svg viewBox="0 0 16 16"><ellipse cx="8" cy="10" rx="5.500" ry="5.500" fill="#e6cf2c"/><path d="M12 7q4-2 3.500 3t-4 3" fill="none" stroke="#d8bd1a" stroke-width="1.500"/><path d="M3 9L1 4l3-3 2 4z" fill="#eee"/><path d="M6 5h6" stroke="#f0e060" stroke-width="2"/><circle cx="8" cy="10" r="1.500" fill="#c54"/></svg>*softwar...</div>
    <div><svg viewBox="0 0 16 16"><path d="M1.500 2l4 6-4 6M14.500 2l-4 6 4 6M0 1.500h16M0 14.500h16" fill="none" stroke="#e8401c" stroke-width="2"/><path d="M4 2h8M5 14h6M8 1v14" stroke="#1420e0" stroke-width="3"/></svg>uxterm</div>
    <div><svg viewBox="0 0 16 16"><path d="M8 0l7 4v4L8 5 1 8V4z" fill="#8a9a38"/><path d="M1 5v7l7 4V8z" fill="#9a3a58"/><path d="M15 5v7l-7 4V8z" fill="#3a6e98"/><path d="M8 4l4 2v5l-4 2-4-2V6z" fill="#c8c8c4"/></svg>[Apache ...</div>
  </div>
  <div class="w-[49px] h-[26px] bg-[#a9c282] border border-white flex items-center justify-center shrink-0"><svg class="size-[16px]"><use href="#firefox"/></svg></div>
  <div class="flex h-[28px] [&>i]:w-[50px] [&>i]:bg-[#2b2a27] [&>i]:border-r [&>i]:border-[#3c3b37]"><i></i><i></i><i></i></div>
  <svg class="ml-[2px]" width="20" height="22" viewBox="0 0 20 22"><path d="M1 3h18l-2.500 18.500h-13z" fill="#a5a5a3"/><ellipse cx="10" cy="3" rx="9" ry="2.200" fill="#555" stroke="#d8d8d6" stroke-width="1.300"/><path d="M5 8l4 4 4-3 2 4-4 5-4-3-2 3" fill="none" stroke="#d0d0ce" stroke-width="2"/></svg>
</footer>
</div>
<script>
  var g = document.getElementById('xlabels'), out = '';
  for (var n = 51; n <= 83; n += 2) out += '<text transform="translate(' + (873.2 + (n - 51) * 14.43) + ' 534) rotate(-90)">#' + n + '</text>';
  g.innerHTML = out;
</script>
</body>
</html>
